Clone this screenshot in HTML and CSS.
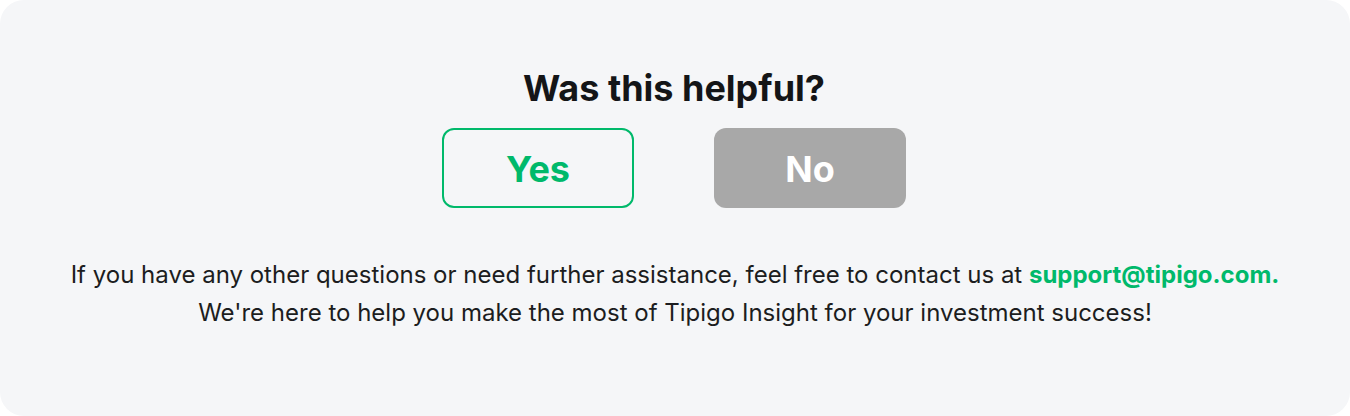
FILE: index.html
```html
<!DOCTYPE html>
<html>
<head>
<meta charset="utf-8">
<link rel="stylesheet" href="styles.css">
</head>
<body>
<section class="card">
  <h2 class="title">Was this helpful?</h2>
  <div class="actions">
    <button class="btn btn-yes">Yes</button>
    <button class="btn btn-no">No</button>
  </div>
  <p class="note">If you have any other questions or need further assistance, feel free to contact us at <a class="mail" href="#">support@tipigo.com.</a><br>We're here to help you make the most of Tipigo Insight for your investment success!</p>
</section>
</body>
</html>
```

FILE: styles.css
```css
* { box-sizing: border-box; }
html, body { margin: 0; padding: 0; background: #ffffff; }
body { font-family: Inter, "Noto Sans", sans-serif; }
.card {
  width: 1350px;
  height: 416px;
  background: #f5f6f8;
  border-radius: 24px;
  display: flex;
  flex-direction: column;
  align-items: center;
  padding-top: 66px;
}
.title {
  margin: 0 0 0 -2px;
  font-size: 36px;
  line-height: 44px;
  font-weight: 700;
  color: #141517;
}
.actions {
  display: flex;
  gap: 80px;
  margin-top: 18px;
  margin-left: -2px;
}
.btn {
  width: 192px;
  height: 80px;
  border-radius: 12px;
  font-family: inherit;
  font-size: 36px;
  font-weight: 700;
  cursor: pointer;
  padding: 2px 0 0;
}
.btn-yes {
  background: transparent;
  border: 2px solid #00b96b;
  color: #00b96b;
}
.btn-no {
  background: #a8a8a8;
  border: none;
  color: #ffffff;
}
.note {
  margin: 48px 0 0;
  text-align: center;
  font-size: 24px;
  line-height: 38px;
  color: #1c1d20;
}
.mail {
  color: #00b96b;
  font-weight: 700;
  text-decoration: none;
}
```
